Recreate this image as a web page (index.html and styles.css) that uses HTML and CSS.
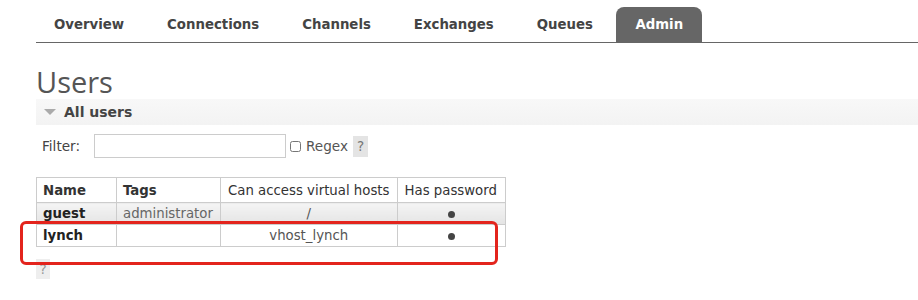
FILE: index.html
```html
<!DOCTYPE html>
<html>

<head>
	<meta charset="utf-8">
	<title>RabbitMQ Management - Users</title>
	<meta name="viewport" content="width=device-width, initial-scale=1.0">
	<link rel="stylesheet" href="styles.css">
</head>

<body>
	<div class="page">
		<ul class="tabs">
			<li><a href="#">Overview</a></li>
			<li><a href="#">Connections</a></li>
			<li><a href="#">Channels</a></li>
			<li><a href="#">Exchanges</a></li>
			<li><a href="#">Queues</a></li>
			<li class="selected"><a href="#">Admin</a></li>
		</ul>

		<h1>Users</h1>

		<div class="section">
			<h2><span class="arrow"></span>All users</h2>
			<div class="filter">
				<label>Filter:</label>
				<input type="text" class="filter-input">
				<span class="regex"><input type="checkbox"> Regex</span>
				<span class="help">?</span>
			</div>

			<table class="list">
				<thead>
					<tr>
						<th class="bold">Name</th>
						<th class="bold">Tags</th>
						<th>Can access virtual hosts</th>
						<th>Has password</th>
					</tr>
				</thead>
				<tbody>
					<tr class="alt">
						<td class="name">guest</td>
						<td class="tags">administrator</td>
						<td class="c">/</td>
						<td class="c"><span class="dot"></span></td>
					</tr>
					<tr>
						<td class="name">lynch</td>
						<td class="tags"></td>
						<td class="c">vhost_lynch</td>
						<td class="c"><span class="dot"></span></td>
					</tr>
				</tbody>
			</table>
			<span class="help small">?</span>

			<!-- red annotation drawn on top of the screenshot -->
			<div class="mark"></div>
		</div>
	</div>
</body>

</html>
```

FILE: styles.css
```css
:root {
	--text: #444;
	--tab: #666;
	--line: #ccc;
	--bar: #f5f5f5;
	--mark: #e3241d;
}

body {
	margin: 0;
	background: #fff;
	color: var(--text);
	font: 13.6px "DejaVu Sans", Verdana, sans-serif;
}

.page {
	padding-left: 36px;
}

.tabs {
	list-style: none;
	margin: 0;
	padding: 7px 0 0;
	display: flex;
	border-bottom: 1px solid var(--tab);
	height: 35px;
}

.tabs li:first-child {
	margin-left: -3.5px;
}

.tabs a {
	display: block;
	height: 35px;
	line-height: 35px;
	padding: 0 21.5px;
	color: var(--text);
	font-size: 13.3px;
	font-weight: bold;
	text-decoration: none;
}

.tabs .selected {
	margin-left: 2px;
}

.tabs .selected a {
	background: var(--tab);
	color: #fff;
	border-radius: 8px 8px 0 0;
	padding: 0 19px;
}

h1 {
	margin: 22px 0 0;
	font-size: 29px;
	font-weight: normal;
	line-height: 34px;
	font-family: "Open Sans", sans-serif;
	color: #555;
}

.section {
	position: relative;
}

h2 {
	margin: 0;
	height: 26px;
	line-height: 26px;
	background: linear-gradient(#f8f8f8, #f3f3f3);
	font-size: 14px;
	font-weight: bold;
	display: flex;
	align-items: center;
}

.arrow {
	width: 0;
	height: 0;
	border-left: 6px solid transparent;
	border-right: 6px solid transparent;
	border-top: 6px solid #aaa;
	margin: 0 8px 0 8px;
}

.filter {
	display: flex;
	align-items: center;
	margin: 10px 0 0 6px;
	height: 22px;
}

.filter label {
	margin-right: 14px;
}

.filter-input {
	width: 190px;
	height: 22px;
	border: 1px solid #ccc;
	padding: 0;
	margin: 0;
}

.regex {
	display: flex;
	align-items: center;
	margin-left: 4px;
	color: #555;
}

.regex input {
	width: 11px;
	height: 11px;
	margin: 0 5px 0 0;
}

.help {
	display: inline-block;
	background: #e4e4e4;
	color: #777;
	width: 15px;
	height: 21px;
	line-height: 21px;
	text-align: center;
	margin-left: 5px;
}

.help.small {
	display: block;
	margin: 12px 0 0;
	background: #eee;
	color: #999;
	width: 14px;
	height: 20px;
	line-height: 20px;
}

.list {
	border-collapse: collapse;
	margin-top: 20px;
	font-size: 13.3px;
}

.list th,
.list td {
	border: 1px solid var(--line);
	padding: 3px 6px;
	line-height: 15px;
	white-space: nowrap;
}

.list th {
	padding: 5px 6px 4px;
	font-weight: normal;
	text-align: left;
	color: #333;
}

.list th:nth-child(3),
.list th:nth-child(4) {
	padding-left: 7px;
	padding-right: 7px;
}

.list th:nth-child(4) {
	padding-right: 8px;
}

.list th.bold {
	font-weight: bold;
	color: #333;
}

.list th:nth-child(1) {
	width: 67px;
}

.list th:nth-child(2) {
	width: 91px;
}

.list tr.alt td {
	background: linear-gradient(#f4f4f4, #e4e4e4);
}

.name {
	font-weight: bold;
	color: #222;
}

.tags {
	color: #666;
}

.c {
	text-align: center;
	color: #555;
}

.dot {
	display: inline-block;
	width: 7px;
	height: 7px;
	border-radius: 50%;
	background: #444;
	vertical-align: middle;
}

.mark {
	position: absolute;
	left: -16px;
	top: 122px;
	width: 472px;
	height: 38px;
	border: 3px solid var(--mark);
	border-radius: 6px;
}
```
